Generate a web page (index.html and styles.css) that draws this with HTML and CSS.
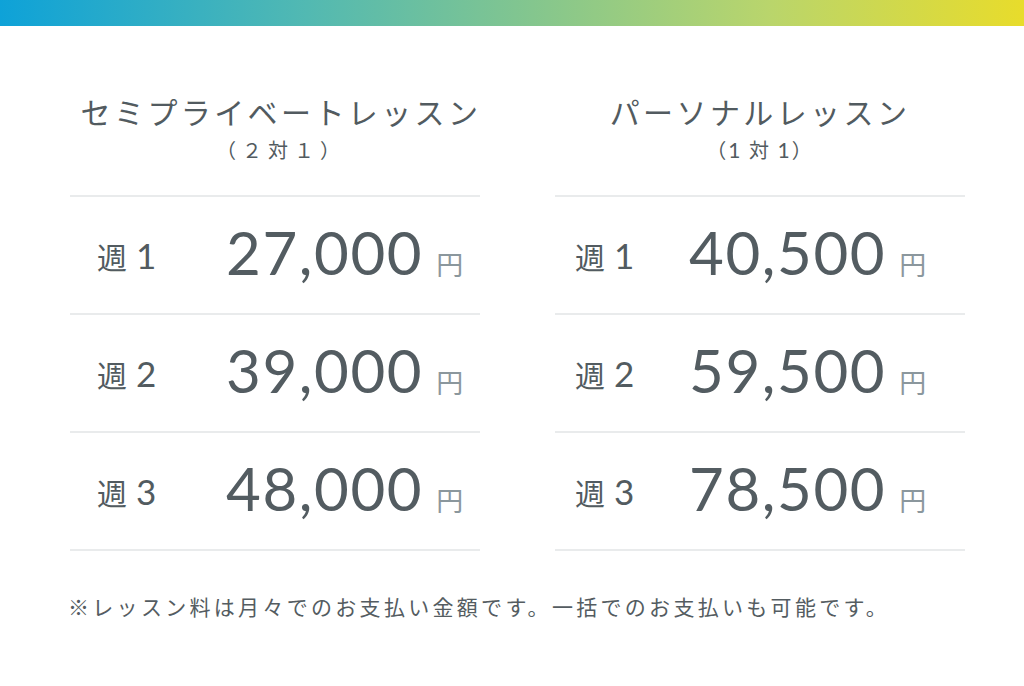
FILE: index.html
```html
<!DOCTYPE html>
<html lang="ja">
<head>
<meta charset="utf-8">
<title>料金</title>
<link rel="stylesheet" href="styles.css">
</head>
<body>
<div class="topbar"></div>
<main class="pricing">
  <div class="plans">
    <section class="plan plan--semi">
      <header class="plan-head">
        <h2 class="plan-title">セミプライベートレッスン</h2>
        <p class="plan-sub">（２対１）</p>
      </header>
      <div class="rows">
        <div class="row"><span class="label">週<span class="num">1</span></span><span class="price">27,000<span class="yen">円</span></span></div>
        <div class="row"><span class="label">週<span class="num">2</span></span><span class="price">39,000<span class="yen">円</span></span></div>
        <div class="row"><span class="label">週<span class="num">3</span></span><span class="price">48,000<span class="yen">円</span></span></div>
      </div>
    </section>
    <section class="plan plan--personal">
      <header class="plan-head">
        <h2 class="plan-title">パーソナルレッスン</h2>
        <p class="plan-sub">（<span class="sub-num">1</span> 対 <span class="sub-num">1</span>）</p>
      </header>
      <div class="rows">
        <div class="row"><span class="label">週<span class="num">1</span></span><span class="price">40,500<span class="yen">円</span></span></div>
        <div class="row"><span class="label">週<span class="num">2</span></span><span class="price">59,500<span class="yen">円</span></span></div>
        <div class="row"><span class="label">週<span class="num">3</span></span><span class="price">78,500<span class="yen">円</span></span></div>
      </div>
    </section>
  </div>
  <p class="note">※レッスン料は月々でのお支払い金額です。一括でのお支払いも可能です。</p>
</main>
</body>
</html>
```

FILE: styles.css
```css
html, body {
  margin: 0;
  padding: 0;
  background: #ffffff;
}

body {
  font-family: Lato, "Noto Sans CJK JP", sans-serif;
  color: #525b60;
  width: 1024px;
  height: 686px;
  overflow: hidden;
}

.topbar {
  height: 26px;
  background: linear-gradient(90deg, #0ea2d8 0%, #52b9b2 30%, #84c68e 52%, #b9d56c 75%, #e8dc2b 100%);
}

.pricing {
  padding: 0 0 0 70px;
}

.plans {
  display: flex;
  gap: 75px;
}

.plan {
  width: 410px;
}

.plan--semi {
  --label-w: 156px;
  --label-pad: 27px;
  --title-shift: 12px;
  --sub-space: 6px;
}

.plan--personal {
  --label-w: 134px;
  --label-pad: 20px;
  --title-shift: -2px;
  --sub-space: 2px;
}

.plan-head {
  text-align: center;
  padding-top: 65px;
  padding-bottom: 31px;
}

.plan-title {
  margin: 0 -20px;
  font-family: "Noto Sans CJK JP", sans-serif;
  font-weight: 400;
  font-size: 30px;
  line-height: 40px;
  letter-spacing: 3.4px;
  white-space: nowrap;
  padding-left: var(--title-shift);
}

.plan-sub {
  margin: 5px 0 0;
  font-family: "Noto Sans CJK JP", sans-serif;
  font-size: 20px;
  line-height: 28px;
  letter-spacing: var(--sub-space);
  white-space: nowrap;
  padding-left: var(--title-shift);
}

.sub-num {
  font-family: Lato, sans-serif;
  font-size: 21px;
}

.rows {
  border-bottom: 2px solid #e9ebec;
}

.row {
  display: flex;
  align-items: center;
  height: 116px;
  border-top: 2px solid #e9ebec;
}

.label {
  box-sizing: border-box;
  width: var(--label-w);
  padding-left: var(--label-pad);
  font-family: "Noto Sans CJK JP", sans-serif;
  font-size: 30px;
  line-height: 1;
  display: flex;
  align-items: baseline;
}

.num {
  font-family: Lato, sans-serif;
  font-size: 35px;
  margin-left: 9px;
}

.price {
  font-family: Lato, sans-serif;
  font-size: 60px;
  letter-spacing: 1.6px;
  line-height: 1;
  color: #535c61;
  display: flex;
  align-items: baseline;
  margin-top: -6px;
}

.yen {
  font-family: "Noto Sans CJK JP", sans-serif;
  font-size: 27px;
  letter-spacing: 0;
  color: #8b979d;
  margin-left: 13px;
}

.note {
  margin: 40px 0 0 -2px;
  font-family: "Noto Sans CJK JP", sans-serif;
  font-size: 21px;
  line-height: 30px;
  letter-spacing: 3.3px;
  white-space: nowrap;
  color: #545c61;
}
```
